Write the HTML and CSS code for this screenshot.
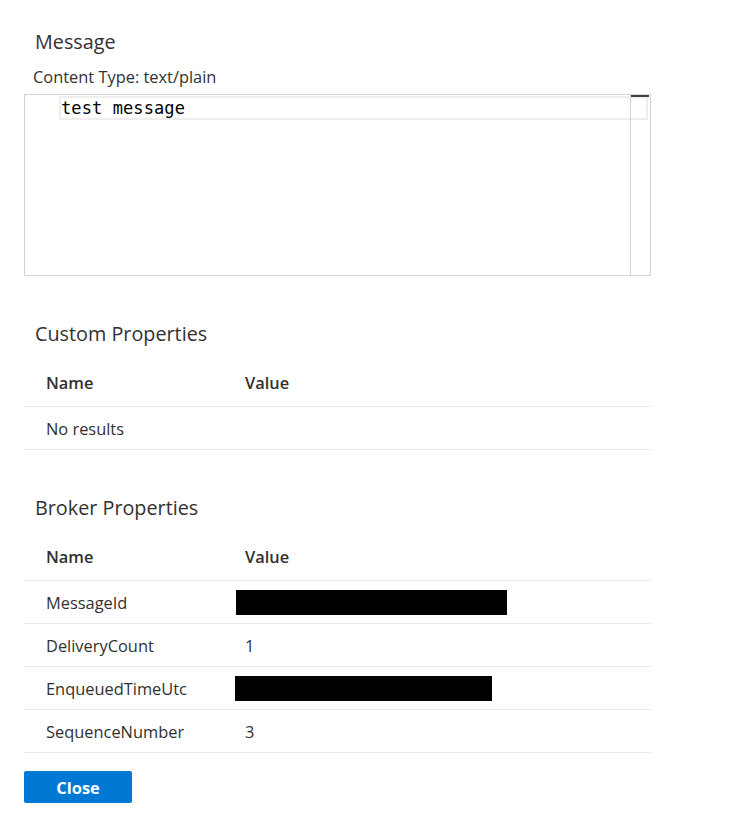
FILE: index.html
```html
<!DOCTYPE html>
<html>
<head>
<meta charset="utf-8">
<link rel="stylesheet" href="styles.css">
</head>
<body>
<div class="panel">
  <h2 class="title title-first">Message</h2>
  <div class="ctype">Content Type: text/plain</div>
  <div class="editor">
    <div class="code">
      <div class="line current"><span class="txt">test message</span></div>
    </div>
    <div class="vscroll"><div class="thumb"></div></div>
  </div>

  <h2 class="title title-custom">Custom Properties</h2>
  <div class="table">
    <div class="row head"><div class="c-name">Name</div><div class="c-val">Value</div></div>
    <div class="row"><div class="c-name">No results</div><div class="c-val"></div></div>
  </div>

  <h2 class="title title-broker">Broker Properties</h2>
  <div class="table">
    <div class="row head"><div class="c-name">Name</div><div class="c-val">Value</div></div>
    <div class="row"><div class="c-name">MessageId</div><div class="c-val"><span class="redact r1"></span></div></div>
    <div class="row"><div class="c-name">DeliveryCount</div><div class="c-val">1</div></div>
    <div class="row"><div class="c-name">EnqueuedTimeUtc</div><div class="c-val"><span class="redact r2"></span></div></div>
    <div class="row"><div class="c-name">SequenceNumber</div><div class="c-val">3</div></div>
  </div>

  <button class="btn">Close</button>
</div>
</body>
</html>
```
FILE: styles.css
```css
html, body {
  margin: 0;
  padding: 0;
  background: #ffffff;
}
body {
  font-family: "Open Sans", "Noto Sans", sans-serif;
  color: #323130;
}
.panel {
  width: 627px;
  padding: 0 0 20px 24px;
  display: flex;
  flex-direction: column;
}
.title {
  margin: 0;
  font-weight: 400;
  font-size: 19.8px;
  line-height: 26px;
  padding-left: 11px;
  color: #323130;
}
.title-first { margin-top: 29px; }
.ctype {
  margin-top: 12px;
  padding-left: 9px;
  font-size: 16.4px;
  line-height: 20px;
  color: #323130;
}
.editor {
  margin-top: 7px;
  height: 180px;
  border: 1px solid #d4d4d4;
  background: #fffffe;
  display: flex;
}
.code {
  flex: 1;
  padding-top: 1px;
  padding-left: 34px;
}
.line.current {
  height: 20px;
  border: 2px solid #eeeeee;
  display: flex;
  align-items: center;
  margin-right: -18px;
  position: relative;
}
.txt {
  font-family: "DejaVu Sans Mono", "Liberation Mono", monospace;
  font-size: 17px;
  line-height: 20px;
  color: #000000;
  letter-spacing: 0.1px;
}
.vscroll {
  width: 19px;
  border-left: 1px solid #d4d4d4;
  position: relative;
}
.thumb {
  height: 2px;
  margin: 0 1px 0 0;
  background: #424242;
  position: relative;
  z-index: 1;
}
.title-custom { margin-top: 45px; }
.title-broker { margin-top: 45px; }
.table {
  margin-top: 11px;
  display: flex;
  flex-direction: column;
}
.row {
  display: flex;
  align-items: center;
  height: 42px;
  border-bottom: 1px solid #edebe9;
  font-size: 16.4px;
}
.row.head {
  height: 48px;
  font-weight: 600;
}
.c-name {
  width: 199px;
  padding-left: 22px;
}
.c-val {
  flex: 1;
  display: flex;
  align-items: center;
}
.redact {
  display: block;
  background: #000000;
  height: 25px;
}
.r1 { width: 271px; margin-left: -9px; }
.r2 { width: 257px; margin-left: -10px; }
.btn {
  margin-top: 18px;
  width: 108px;
  height: 32px;
  border: none;
  border-radius: 2px;
  background: #0078d4;
  color: #ffffff;
  font-family: "Open Sans", "Noto Sans", sans-serif;
  font-weight: 700;
  font-size: 16.4px;
  padding: 0;
  align-self: flex-start;
}
```
